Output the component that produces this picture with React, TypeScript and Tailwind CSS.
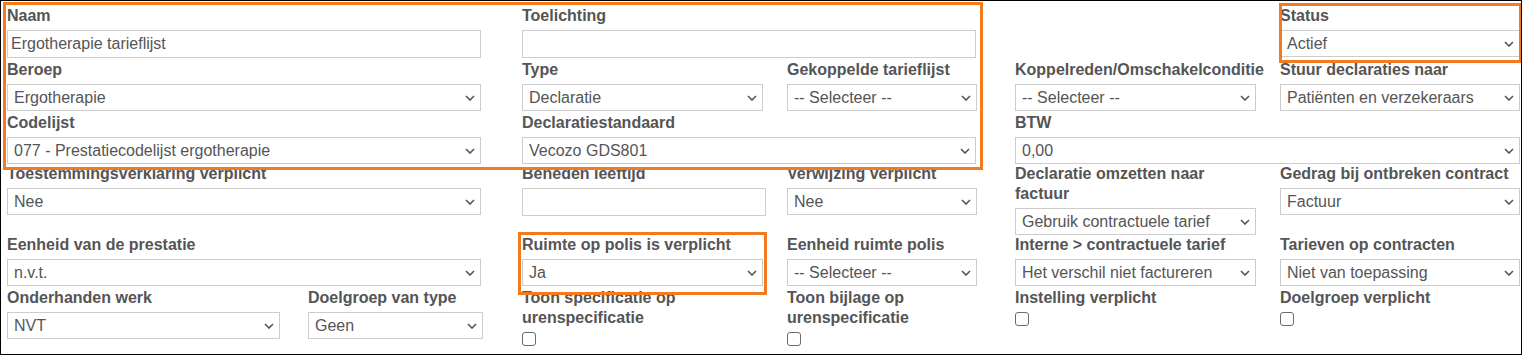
import React from 'react';

const labelCls = 'block text-[16px] leading-[20px] font-bold text-[#555] mb-[4px]';

function Chevron() {
  return (
    <svg
      width="10"
      height="6"
      viewBox="0 0 10 6"
      className="pointer-events-none absolute right-[6px] top-1/2 -translate-y-1/2"
    >
      <path d="M1 1l4 4 4-4" fill="none" stroke="#555" strokeWidth="1.6" />
    </svg>
  );
}

function Select({ value }: { value: string }) {
  return (
    <div className="relative">
      <select
        defaultValue={value}
        className="block w-full h-[27px] appearance-none rounded-none border border-[#ccc] bg-white pl-[6px] pr-6 text-[16px] text-[#555] outline-none"
      >
        <option>{value}</option>
      </select>
      <Chevron />
    </div>
  );
}

function TextInput({ value = '' }: { value?: string }) {
  return (
    <input
      type="text"
      defaultValue={value}
      className="block w-full h-[28px] rounded-none border border-[#ccc] bg-white pl-[3px] text-[16px] text-[#555] outline-none"
    />
  );
}

function Check() {
  return (
    <input
      type="checkbox"
      className="block mt-[1px] w-[14px] h-[14px] appearance-none rounded-[3px] border border-[#6b6b6b] bg-white"
    />
  );
}

function Field({ label, className, children }: { label: string; className: string; children: React.ReactNode }) {
  return (
    <div className={className}>
      <label className={labelCls}>{label}</label>
      {children}
    </div>
  );
}

export default function App() {
  return (
    <div className="relative w-[1522px] h-[355px] overflow-hidden border border-black bg-white font-['Liberation_Sans',Arial,sans-serif]">
      <div className="grid grid-cols-[515px_265px_228px_265px_241px] grid-rows-[54px_53px_51px_71px_53px_auto] items-start pl-[6px] pt-[5px]">
        {/* rij 1 */}
        <Field label="Naam" className="w-[474px]">
          <TextInput value="Ergotherapie tarieflijst" />
        </Field>
        <Field label="Toelichting" className="col-span-2 w-[454px]">
          <TextInput />
        </Field>
        <div />
        <Field label="Status" className="w-[240px]">
          <Select value="Actief" />
        </Field>

        {/* rij 2 */}
        <Field label="Beroep" className="w-[474px]">
          <Select value="Ergotherapie" />
        </Field>
        <Field label="Type" className="w-[241px]">
          <Select value="Declaratie" />
        </Field>
        <Field label="Gekoppelde tarieflijst" className="w-[190px]">
          <Select value="-- Selecteer --" />
        </Field>
        <div className="w-[241px]">
          <label className={labelCls + ' whitespace-nowrap'}>Koppelreden/Omschakelconditie</label>
          <Select value="-- Selecteer --" />
        </div>
        <Field label="Stuur declaraties naar" className="w-[240px]">
          <Select value="Patiënten en verzekeraars" />
        </Field>

        {/* rij 3 */}
        <Field label="Codelijst" className="w-[474px]">
          <Select value="077 - Prestatiecodelijst ergotherapie" />
        </Field>
        <Field label="Declaratiestandaard" className="col-span-2 w-[454px]">
          <Select value="Vecozo GDS801" />
        </Field>
        <Field label="BTW" className="col-span-2 w-[505px]">
          <Select value="0,00" />
        </Field>

        {/* rij 4 */}
        <Field label="Toestemmingsverklaring verplicht" className="w-[474px]">
          <Select value="Nee" />
        </Field>
        <Field label="Beneden leeftijd" className="w-[244px]">
          <TextInput />
        </Field>
        <Field label="Verwijzing verplicht" className="w-[190px]">
          <Select value="Nee" />
        </Field>
        <Field label="Declaratie omzetten naar factuur" className="w-[241px]">
          <Select value="Gebruik contractuele tarief" />
        </Field>
        <Field label="Gedrag bij ontbreken contract" className="w-[240px]">
          <Select value="Factuur" />
        </Field>

        {/* rij 5 */}
        <Field label="Eenheid van de prestatie" className="w-[474px]">
          <Select value="n.v.t." />
        </Field>
        <Field label="Ruimte op polis is verplicht" className="w-[241px]">
          <Select value="Ja" />
        </Field>
        <Field label="Eenheid ruimte polis" className="w-[190px]">
          <Select value="-- Selecteer --" />
        </Field>
        <Field label="Interne > contractuele tarief" className="w-[241px]">
          <Select value="Het verschil niet factureren" />
        </Field>
        <Field label="Tarieven op contracten" className="w-[240px]">
          <Select value="Niet van toepassing" />
        </Field>

        {/* rij 6 */}
        <div className="flex gap-[28px]">
          <Field label="Onderhanden werk" className="w-[273px]">
            <Select value="NVT" />
          </Field>
          <Field label="Doelgroep van type" className="w-[175px]">
            <Select value="Geen" />
          </Field>
        </div>
        <Field label="Toon specificatie op urenspecificatie" className="w-[241px]">
          <Check />
        </Field>
        <Field label="Toon bijlage op urenspecificatie" className="w-[190px]">
          <Check />
        </Field>
        <Field label="Instelling verplicht" className="w-[241px]">
          <Check />
        </Field>
        <Field label="Doelgroep verplicht" className="w-[240px]">
          <Check />
        </Field>
      </div>

      {/* oranje markeringen */}
      <div className="pointer-events-none absolute left-[2px] top-[1px] w-[980px] h-[168px] border-[3px] border-[#f47a20]" />
      <div className="pointer-events-none absolute left-[1278px] top-[2px] w-[243px] h-[60px] border-[3px] border-[#f47a20]" />
      <div className="pointer-events-none absolute left-[517px] top-[231px] w-[249px] h-[63px] border-[3px] border-[#f47a20]" />
    </div>
  );
}
